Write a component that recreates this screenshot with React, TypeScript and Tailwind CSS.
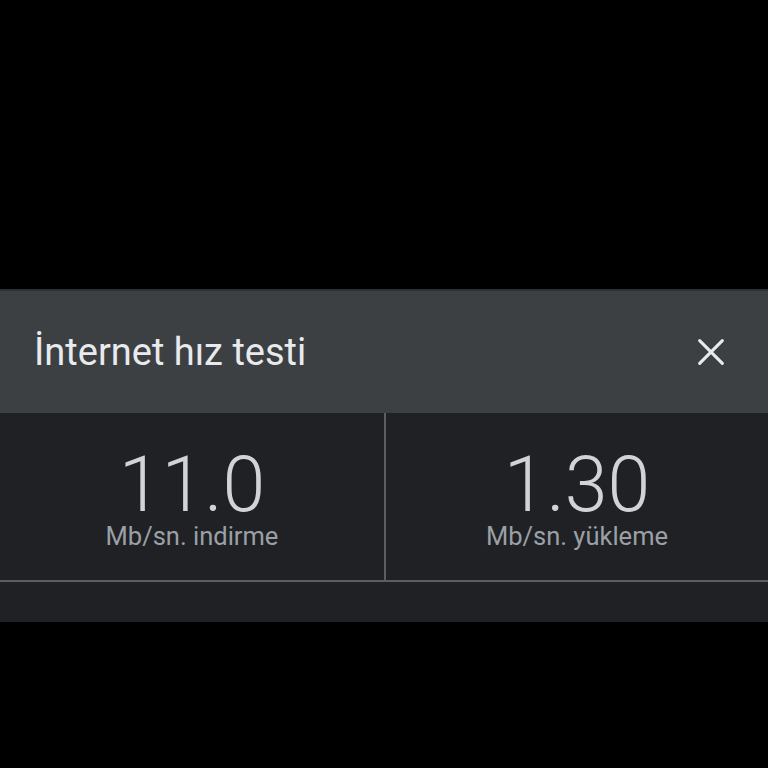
import React from 'react';

// Speed test result panel (dark theme)
export default function App() {
  return (
    <div className="w-[768px] h-[768px] bg-black flex flex-col" style={{ fontFamily: 'Roboto, "Noto Sans", sans-serif' }}>
      <div className="h-[289px] shrink-0" />
      <div className="h-[2px] bg-[#2e3134]" />
      {/* Header */}
      <div className="h-[122px] bg-[#3c4043] flex items-center justify-between pl-[34px] pr-[40px]">
        <span className="text-[38px] leading-[44px] text-[#e8eaed]">İnternet hız testi</span>
        <svg width="34" height="34" viewBox="0 0 24 24" className="text-[#e8eaed]">
          <path d="M4 4 L20 20 M20 4 L4 20" stroke="currentColor" strokeWidth="2.2" strokeLinecap="round" />
        </svg>
      </div>
      {/* Results */}
      <div className="bg-[#202124] flex flex-col">
        <div className="h-[167px] grid grid-cols-2">
          <div className="flex flex-col items-center justify-center pt-[4px]">
            <span className="text-[77px] font-light leading-[74px] text-[#d2d3d5]">11.0</span>
            <span className="text-[25.5px] leading-[28px] text-[#9aa0a6]">Mb/sn. indirme</span>
          </div>
          <div className="flex flex-col items-center justify-center border-l-2 border-[#5a5d61] pt-[4px]">
            <span className="text-[77px] font-light leading-[74px] text-[#d2d3d5]">1.30</span>
            <span className="text-[25.5px] leading-[28px] text-[#9aa0a6]">Mb/sn. yükleme</span>
          </div>
        </div>
        <div className="h-[2px] bg-[#5a5d61]" />
        <div className="h-[40px]" />
      </div>
    </div>
  );
}
